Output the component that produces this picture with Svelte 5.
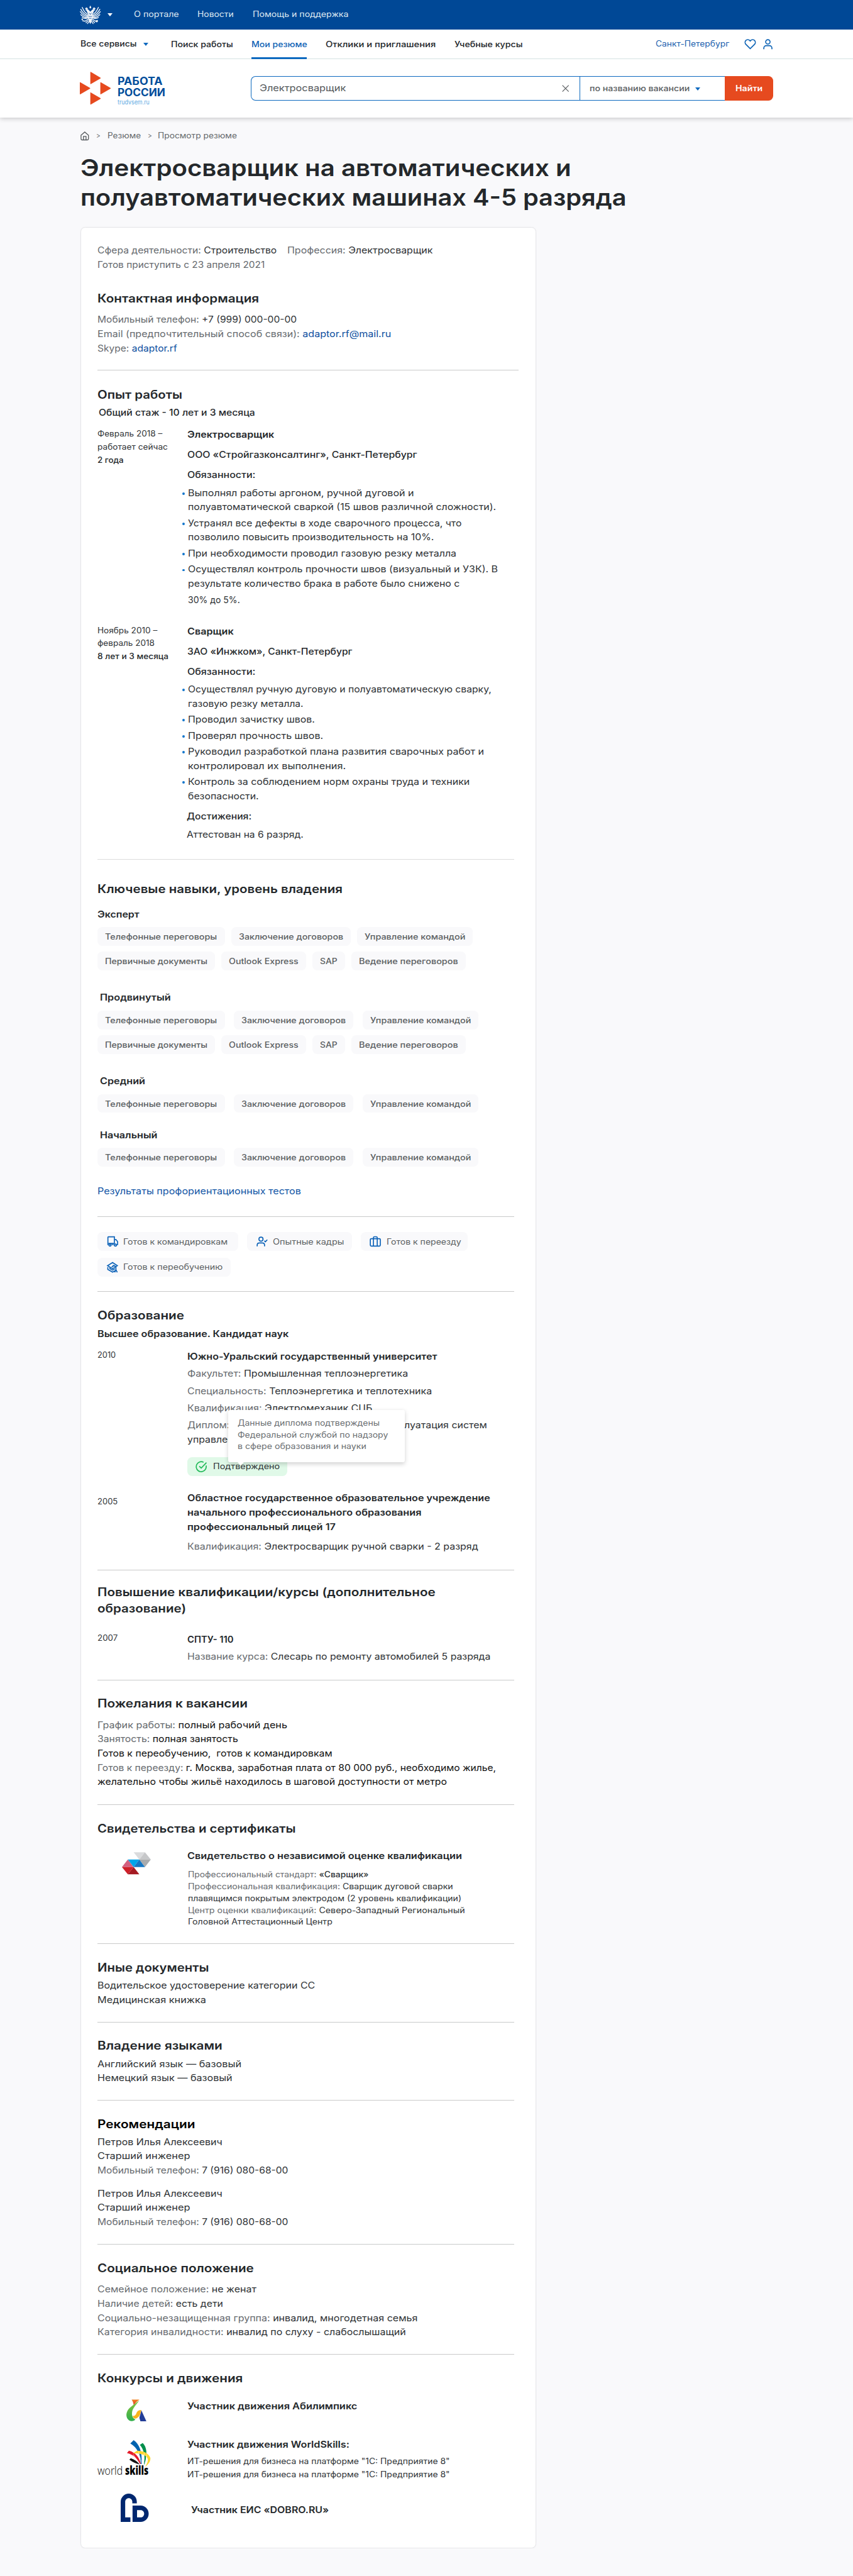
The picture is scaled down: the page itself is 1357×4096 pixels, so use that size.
<script>
  // Widens a line of text until it is `width` design units wide.
  function fit(node, width) {
    const unit = parseFloat(getComputedStyle(document.documentElement).fontSize) / 10;
    const natural = node.getBoundingClientRect().width;
    if (!width || !natural) return;
    const target = width * unit;
    node.style.transform = `scaleX(${target / natural})`;
    node.style.marginRight = `${target - natural}px`;
  }

  const jobs = [
    {
      period: [['Февраль 2018 –', 136], ['работает сейчас', 147.5]],
      total: ['2 года', 55],
      title: ['Электросварщик', 182],
      company: ['ООО «Стройгазконсалтинг», Санкт-Петербург', 482],
      duties: [
        [['Выполнял работы аргоном, ручной дуговой и', 474], ['полуавтоматической сваркой (15 швов различной сложности).', 646]],
        [['Устранял все дефекты в ходе сварочного процесса, что', 574], ['позволило повысить производительность на 10%.', 516]],
        [['При необходимости проводил газовую резку металла', 563]],
        [['Осуществлял контроль прочности швов (визуальный и УЗК). В', 650], ['результате количество брака в работе было снижено с', 570], ['30% до 5%.', 109]]
      ]
    },
    {
      period: [['Ноябрь 2010 –', 125.5], ['февраль 2018', 120]],
      total: ['8 лет и 3 месяца', 149],
      title: ['Сварщик', 97],
      company: ['ЗАО «Инжком», Санкт-Петербург', 346],
      duties: [
        [['Осуществлял ручную дуговую и полуавтоматическую сварку,', 636.5], ['газовую резку металла.', 242]],
        [['Проводил зачистку швов.', 266]],
        [['Проверял прочность швов.', 283.5]],
        [['Руководил разработкой плана развития сварочных работ и', 621], ['контролировал их выполнения.', 331]],
        [['Контроль за соблюдением норм охраны труда и техники', 591], ['безопасности.', 148.5]]
      ],
      award: ['Аттестован на 6 разряд.', 245]
    }
  ];

  const base = [['Телефонные переговоры', 235], ['Заключение договоров', 219], ['Управление командой', 211.5]];
  const extra = [['Первичные документы', 215], ['Outlook Express', 146], ['SAP', 36.5], ['Ведение переговоров', 208]];
  const skills = [
    { name: ['Эксперт', 88], rows: [base, extra] },
    { name: ['Продвинутый', 148.5], rows: [base, extra] },
    { name: ['Средний', 95], rows: [base] },
    { name: ['Начальный', 120.5], rows: [base] }
  ];
</script>

{#snippet line(text, w, cls = '')}
  <div class="line {cls}"><span use:fit={w}>{text}</span></div>
{/snippet}

{#snippet item([text, w], cls = '')}
  {@render line(text, w, cls)}
{/snippet}

{#snippet pair(label, value, w, cls = '')}
  <div class="line {cls}"><span use:fit={w}><span class="label">{label}</span> <span class="value">{value}</span></span></div>
{/snippet}

<header>
  <div class="top">
    <svg class="eagle" viewBox="0 0 44 42" fill="#f1f4f8" stroke="#f1f4f8" stroke-linecap="round">
      <path d="M20 5l2-4 2 4-1 2h-2zM11 7l3-2 3 2-1 2h-4zM33 7l-3-2-3 2 1 2h4z" stroke="none" />
      <path d="M11 11c2-3 7-3 8 0l3 3 3-3c1-3 6-3 8 0-3 0-4 1-4 4l-3 4 1 7-2 8-3 6-3-6-2-8 1-7-3-4c0-3-1-4-4-4z" stroke="none" />
      <path d="M18 20C11 18 8 12 5 5M17 22C10 21 6 16 2 9M17 24C11 24 6 21 1 14M17 26C12 27 7 25 2 20M17 27c-4 2-8 2-12-1M26 20c7-2 10-8 13-15M27 22c7-1 11-6 15-13M27 24c6 0 11-3 16-10M27 26c5 1 10-1 15-6M27 27c4 2 8 2 12-1" fill="none" stroke-width="1.9" />
      <path d="M18 29l-7 5-5-1M26 29l7 5 4-2M17 33l-4 4M27 33l4 4M19 35l-3 4M25 35l3 4" fill="none" stroke-width="1.8" />
      <circle cx="35.5" cy="34" r="2.4" stroke="none" /><circle cx="5" cy="30" r="1.6" stroke="none" />
      <path d="M20 17l2 3 2-3M19 24h6M20 28h4" fill="none" stroke="#004896" stroke-width="1" />
    </svg>
    <i class="caret white"></i>
    <nav class="top-nav">
      {@render line('О портале', 94.5)}
      {@render line('Новости', 76)}
      {@render line('Помощь и поддержка', 201)}
    </nav>
  </div>

  <div class="menu">
    {@render line('Все сервисы', 118)}
    <i class="caret"></i>
    <nav class="menu-nav">
      {@render line('Поиск работы', 130)}
      {@render line('Мои резюме', 117, 'active')}
      {@render line('Отклики и приглашения', 231)}
      {@render line('Учебные курсы', 143)}
    </nav>
    <div class="account">
      {@render line('Санкт-Петербург', 154.5, 'city')}
      <svg class="heart" viewBox="0 0 25 22"><path d="M12.5 20.3L3.6 11.4C1.2 9 1.2 5.4 3.3 3.1c2.2-2.4 6-2.3 8.2.1l1 1.1 1-1.1c2.2-2.4 6-2.5 8.2-.1 2.1 2.3 2.1 5.9-.3 8.3z" /></svg>
      <svg class="user" viewBox="0 0 20 22"><circle cx="10" cy="6" r="4.6" /><path d="M1.5 21.5v-2.3c0-3 2.2-5.2 5-5.2h7c2.8 0 5 2.2 5 5.2v2.3" /></svg>
    </div>
  </div>

  <div class="finder">
    <div class="logo">
      <svg viewBox="0 0 65 69" fill="#e64a1f"><path d="M22 1.3q0-1.6 1.4-.6L43.3 12.5q1.2.8 0 1.7L23.4 25.7q-1.4.8-1.4-.7zM0 23q0-1.6 1.4-.6L21.3 34q1.2.8 0 1.7L1.4 47.3Q0 48 0 46.6zM43 23q0-1.6 1.4-.6L64.3 34q1.2.8 0 1.7L44.4 47.3q-1.4.8-1.4-.7zM22 44.3q0-1.6 1.4-.6L43.3 55.3q1.2.8 0 1.7L23.4 68.5q-1.4.8-1.4-.7z" /></svg>
      <div class="logo-text">
        {@render line('РАБОТА', 94.5, 'brand')}
        {@render line('РОССИИ', 100, 'brand')}
        {@render line('trudvsem.ru', 67, 'site')}
      </div>
    </div>
    <div class="search">
      <div class="query">
        {@render line('Электросварщик', 181)}
        <svg viewBox="0 0 16 16"><path d="M1 1l14 14M15 1L1 15" /></svg>
      </div>
      <div class="scope">
        {@render line('по названию вакансии', 210)}
        <i class="caret"></i>
      </div>
      <button>{@render line('Найти', 57)}</button>
    </div>
  </div>
</header>

<main>
  <div class="crumbs">
    <svg viewBox="0 0 18 19"><path d="M1.2 8L9 1.2 16.8 8v7.5q0 2.3-2.3 2.3h-11q-2.3 0-2.3-2.3zM6.3 17.5v-7h5.4v7" /></svg>
    {@render line('>', 9, 'gt')}
    {@render line('Резюме', 70)}
    {@render line('>', 9, 'gt second')}
    {@render line('Просмотр резюме', 166)}
  </div>
  <h1>
    {@render line('Электросварщик на автоматических и', 1029)}
    {@render line('полуавтоматических машинах 4-5 разряда', 1145)}
  </h1>

  <article>
    <section class="contacts">
      <div class="intro">
        {@render pair('Сфера деятельности:', 'Строительство', 376)}
        {@render pair('Профессия:', 'Электросварщик', 305)}
      </div>
      {@render line('Готов приступить с 23 апреля 2021', 351, 'label')}
      <h2>{@render line('Контактная информация', 339)}</h2>
      {@render pair('Мобильный телефон:', '+7 (999) 000-00-00', 418)}
      {@render pair('Email (предпочтительный способ связи):', 'adaptor.rf@mail.ru', 616, 'link')}
      {@render pair('Skype:', 'adaptor.rf', 167, 'link')}
    </section>

    <section class="experience">
      <h2>{@render line('Опыт работы', 178)}</h2>
      {@render line('Общий стаж - 10 лет и 3 месяца', 328, 'total medium')}
      {#each jobs as job}
        <div class="entry">
          <div class="small">
            {#each job.period as row}{@render item(row)}{/each}
            {@render item(job.total, 'medium')}
          </div>
          <div>
            <div class="headings">
              {@render item(job.title, 'bold')}
              {@render item(job.company, 'medium')}
              {@render line('Обязанности:', 143, 'medium')}
            </div>
            <ul>
              {#each job.duties as duty}
                <li>{#each duty as row}{@render item(row)}{/each}</li>
              {/each}
            </ul>
            {#if job.award}
              <div class="award">
                {@render line('Достижения:', 136, 'medium')}
                {@render item(job.award)}
              </div>
            {/if}
          </div>
        </div>
      {/each}
    </section>

    <section class="skills">
      <h2>{@render line('Ключевые навыки, уровень владения', 514)}</h2>
      {#each skills as level}
        <div class="level">
          {@render item(level.name, 'bold')}
          {#each level.rows as row}
            <div class="tags">
              {#each row as tag}<div class="tag">{@render item(tag)}</div>{/each}
            </div>
          {/each}
        </div>
      {/each}
      {@render line('Результаты профориентационных тестов', 427, 'results')}
    </section>

    <section class="readiness">
      <div class="tag trip">
        <svg viewBox="0 0 24 24"><path d="M3.5 18.5H2.2V3.2q0-1 1-1h12.6v15.3M15.8 8h3.4l3.3 4.3v6.2h-1.5M9.8 18.5h4.5M3.5 16h11" /><circle cx="6.5" cy="19.5" r="2.2" /><circle cx="18" cy="19.5" r="2.2" /></svg>
        {@render line('Готов к командировкам', 219)}
      </div>
      <div class="tag staff">
        <svg viewBox="0 0 24 24"><circle cx="9.5" cy="7" r="4.3" /><path d="M1.5 22v-2.5c0-2.8 2-4.5 4.5-4.5h6.5c2.7 0 4.5 1.7 4.5 4.5V22M16.5 10.5l2.2 2 4-4.2" /></svg>
        {@render line('Опытные кадры', 149.5)}
      </div>
      <div class="tag move">
        <svg viewBox="0 0 24 24"><rect x="1.5" y="6" width="21" height="15.5" rx="2" /><path d="M8 21V4q0-2 2-2h4q2 0 2 2v17" /></svg>
        {@render line('Готов к переезду', 156.5)}
      </div>
      <div class="tag study">
        <svg viewBox="0 0 24 24"><path d="M12 2L1.5 8.5 12 15l10-6.3zM2 11.5v5L12 22l6-3.3M6.5 12v3L12 18l5-3M12 8.5h3.5l3.5 2.3V20M19 17l-2.5 5.5M19 17l2.8 5.5M10 11.5l5-3" /></svg>
        {@render line('Готов к переобучению', 208.5)}
      </div>
    </section>

    <section class="education">
      <h2>{@render line('Образование', 182)}</h2>
      {@render line('Высшее образование. Кандидат наук', 401, 'bold')}
      <div class="entry">
        <div class="small">{@render line('2010', 38.5)}</div>
        <div class="facts">
          {@render line('Южно-Уральский государственный университет', 524, 'bold')}
          {@render pair('Факультет:', 'Промышленная теплоэнергетика', 463)}
          {@render pair('Специальность:', 'Теплоэнергетика и теплотехника', 513)}
          {@render pair('Квалификация:', 'Электромеханик СЦБ', 388)}
          <div>
            {@render pair('Диплом:', 'Обслуживание и техническая эксплуатация систем', 628.5)}
            {@render line('управления', 121)}
          </div>
          <div class="confirmed">
            <svg viewBox="0 0 24 24"><path d="M22.5 9.5V12A10.500 10.500 0 1 1 17 2.8M8 11l4 4L23 3.500" /></svg>
            {@render line('Подтверждено', 140)}
            <div class="tooltip">
              {@render line('Данные диплома подтверждены', 298)}
              {@render line('Федеральной службой по надзору', 315.5)}
              {@render line('в сфере образования и науки', 270)}
            </div>
          </div>
        </div>
      </div>
      <div class="entry">
        <div class="small">{@render line('2005', 42.5)}</div>
        <div>
          {@render line('Областное государственное образовательное учреждение', 635, 'bold')}
          {@render line('начального профессионального образования', 491, 'bold')}
          {@render line('профессиональный лицей 17', 311, 'bold')}
          <div class="grade">{@render pair('Квалификация:', 'Электросварщик ручной сварки - 2 разряд', 610)}</div>
        </div>
      </div>
    </section>

    <section class="courses">
      <h2>
        {@render line('Повышение квалификации/курсы (дополнительное', 709)}
        {@render line('образование)', 186)}
      </h2>
      <div class="entry">
        <div class="small">{@render line('2007', 42.5)}</div>
        <div class="facts">
          {@render line('СПТУ- 110', 97, 'bold')}
          {@render pair('Название курса:', 'Слесарь по ремонту автомобилей 5 разряда', 636)}
        </div>
      </div>
    </section>

    <section class="wishes">
      <h2>{@render line('Пожелания к вакансии', 315)}</h2>
      {@render pair('График работы:', 'полный рабочий день', 398)}
      {@render pair('Занятость:', 'полная занятость', 295)}
      {@render line('Готов к переобучению,\u00a0 готов к командировкам', 492.5)}
      {@render pair('Готов к переезду:', 'г. Москва, заработная плата от 80 000 руб., необходимо жилье,', 836)}
      {@render line('желательно чтобы жильё находилось в шаговой доступности от метро', 733)}
    </section>

    <section class="certificates">
      <h2>{@render line('Свидетельства и сертификаты', 416)}</h2>
      <div class="entry">
        <svg class="hex" viewBox="0 0 62 47">
          <path fill="#dadbdd" d="M25 0h24L37 15.5z" /><path fill="#c6c7c9" d="M49 0l12.5 15.5H37z" /><path fill="#a9abad" d="M61.5 15.5L49 31.3 37 15.5z" />
          <path fill="#d3607f" d="M12.5 15.5L25 31.3H0z" /><path fill="#00a5ea" d="M12.5 15.5H37L25 31.3z" /><path fill="#1677c4" d="M37 15.5l12 15.8H25z" />
          <path fill="#ce2029" d="M0 31.3h25L12.5 47z" /><path fill="#a51a22" d="M25 31.3L37 47H12.5z" />
        </svg>
        <div>
          {@render line('Свидетельство о независимой оценке квалификации', 576, 'bold')}
          <div class="small tight">
            {@render pair('Профессиональный стандарт:', '«Сварщик»', 379, 'strong')}
            {@render pair('Профессиональная квалификация:', 'Сварщик дуговой сварки', 556)}
            {@render line('плавящимся покрытым электродом (2 уровень квалификации)', 573.5)}
            {@render pair('Центр оценки квалификаций:', 'Северо-Западный Региональный', 581)}
            {@render line('Головной Аттестационный Центр', 303)}
          </div>
        </div>
      </div>
    </section>

    <section class="documents">
      <h2>{@render line('Иные документы', 234)}</h2>
      {@render line('Водительское удостоверение категории СС', 456.5)}
      {@render line('Медицинская книжка', 228)}
    </section>

    <section class="languages">
      <h2>{@render line('Владение языками', 262)}</h2>
      {@render line('Английский язык — базовый', 302)}
      {@render line('Немецкий язык — базовый', 283)}
    </section>

    <section class="references">
      <h2>{@render line('Рекомендации', 205)}</h2>
      {#each [1, 2] as _}
        <div class="referee">
          {@render line('Петров Илья Алексеевич', 262)}
          {@render line('Старший инженер', 194.5)}
          {@render pair('Мобильный телефон:', '7 (916) 080-68-00', 400)}
        </div>
      {/each}
    </section>

    <section class="social">
      <h2>{@render line('Социальное положение', 328)}</h2>
      {@render pair('Семейное положение:', 'не женат', 333.5)}
      {@render pair('Наличие детей:', 'есть дети', 263.5)}
      {@render pair('Социально-незащищенная группа:', 'инвалид, многодетная семья', 671.5)}
      {@render pair('Категория инвалидности:', 'инвалид по слуху - слабослышащий', 647)}
    </section>

    <section class="contests">
      <h2>{@render line('Конкурсы и движения', 305)}</h2>
      <div class="entry abilympics">
        <svg viewBox="0 0 42 46">
          <defs>
            <linearGradient id="gr" x1="0" y1="0" x2="0" y2="1"><stop offset="0" stop-color="#f08322" /><stop offset="1" stop-color="#e2342a" /></linearGradient>
            <linearGradient id="gg" x1="0" y1="0" x2="0" y2="1"><stop offset="0" stop-color="#8bc53f" /><stop offset="1" stop-color="#2fae4b" /></linearGradient>
          </defs>
          <path fill="url(#gr)" d="M11 .5h16.5C23 3 19 7 15.5 13 15 8 13.5 4 11 .5z" />
          <path fill="url(#gg)" d="M27 2C20 13 13 18 12 27c-.8 7 1 12 7 15-4 5-13 5-17-2-4-8-1-17 6-23C15 11 20 7 27 2z" />
          <path fill="#f9b41c" d="M31.5 22.5c-7-.5-9 3-10.5 7-1.5 4-4.5 6-8 5 1 4 3 6 6.5 6C27 38 30 31 31.5 22.5z" />
          <path fill="#233e97" d="M31.5 23L42 46H29.5l-2-7c0-3 3-9 4-16z" />
        </svg>
        {@render line('Участник движения Абилимпикс', 356.5, 'bold')}
      </div>
      <div class="entry worldskills">
        <div class="ws">
          <svg viewBox="0 0 50 56">
            <path fill="#0063af" d="M7 7L14 0c12 8 18 24 17 50h-2C28 30 22 16 7 7z" />
            <path fill="#008f4c" d="M27 10l6-4c9 9 10 23 4 45h-1.5C38 34 36 20 27 10z" />
            <path fill="#e51b2b" d="M0 27l4-5c13 3 22 13 25 28h-1.5C21 38 13 30 0 27z" />
            <path fill="#111" d="M5 41l3-3c8 3 14 7 19 13-8-2-14-4-22-10z" />
            <path fill="#ffd52e" d="M12 28L21 22c12 0 25 5 28 15 1 7-4 14-11 19 5-8 7-13 5-18-4-8-19-11-31-10z" />
            <path d="M24 24l8 27M36 26q1 12-2 25M41 30q1 12-5 22M13 30l14 21" fill="none" stroke="#fff" stroke-width=".8" />
          </svg>
          <div class="wordmark"><span use:fit={53}>world</span><b use:fit={49}>skills</b></div>
        </div>
        <div>
          {@render line('Участник движения WorldSkills:', 340, 'bold')}
          <div class="small">
            {@render line('ИТ-решения для бизнеса на платформе "1С: Предприятие 8"', 550.5)}
            {@render line('ИТ-решения для бизнеса на платформе "1С: Предприятие 8"', 550.5)}
          </div>
        </div>
      </div>
      <div class="entry dobro">
        <svg viewBox="0 0 59 59.5" fill="#00276f">
          <path fill-rule="evenodd" d="M0 59.5V17.5C0 8 7.5 0 17 0s17 7.5 17 17v3.5h-9.5V17c0-4.5-3.3-7.7-7.5-7.7S9.5 12.7 9.5 17v33h11v9.5zM25 25h17c9.5 0 17 7.5 17 17.2S51.5 59.5 42 59.5H25zM34.5 34.5V50H42c4.3 0 7.5-3.4 7.5-7.8s-3.2-7.7-7.5-7.7z" />
        </svg>
        {@render line('Участник ЕИС «DOBRO.RU»', 289, 'bold')}
      </div>
    </section>
  </article>
</main>

<style>
  /* 1rem equals ten design units of the 1789-unit wide layout. */
  :global(html) { font-size: calc(1000vw / 1789); }
  :global(body) { margin: 0; background: #f9f9fb; }
  :global(#app) { font-family: Inter, 'Open Sans', sans-serif; color: #2f3336; font-size: 1.92rem; line-height: 2.98rem; }

  h1, h2 { margin: 0; font-weight: 600; color: #24282b; }
  h2 { font-size: 2.4rem; line-height: 3.5rem; }
  .line { white-space: nowrap; }
  .line > span { display: inline-block; transform-origin: 0 50%; }
  svg { display: block; overflow: visible; flex: none; }
  .label { color: #676b6f; }
  .medium { font-weight: 500; color: #24282b; }
  .bold { font-weight: 600; color: #24282b; }
  .link .value { color: #0d4f9f; }
  .strong .value { font-weight: 500; }
  .small { font-size: 1.68rem; line-height: 2.72rem; }
  .caret { width: 0; height: 0; border: .6rem solid transparent; border-top: .7rem solid #0d69bf; border-bottom: 0; flex: none; }
  .caret.white { border-top-color: #fff; }

  header { background: #fff; box-shadow: 0 .3rem 1rem rgba(0, 0, 0, .22); font-size: 1.68rem; }
  .top { height: 6.2rem; box-sizing: border-box; background: #004896; color: #dfe8f2; padding-left: 16.8rem; display: flex; align-items: center; }
  .eagle { width: 4.4rem; height: 4.2rem; margin-right: 1.3rem; }
  .top-nav { display: flex; gap: 3.95rem; margin-left: 4.5rem; padding-bottom: .1rem; }
  .menu { height: 6.2rem; box-sizing: border-box; border-bottom: 1px solid #d5e2e2; padding: 0 16.8rem 0 16.9rem; display: flex; align-items: center; font-weight: 500; color: #212529; }
  .menu > .caret { margin: .1rem 0 0 1.35rem; }
  .menu-nav { display: flex; gap: 3.9rem; margin-left: 4.7rem; align-self: stretch; line-height: 6.3rem; }
  .menu-nav :global(.active) { color: #0f63b5; box-shadow: inset 0 -.4rem #0d69bf; height: 6.2rem; }
  .account { margin-left: auto; display: flex; align-items: center; font-weight: 400; color: #1c5fae; }
  .account svg { height: 2.2rem; fill: none; stroke: #0d63b5; stroke-width: 2.2; }
  .heart { width: 2.5rem; margin-left: 3.15rem; }
  .user { width: 2rem; margin-left: 1.5rem; }
  .finder { height: 12.3rem; box-sizing: border-box; padding: 2.6rem 16.8rem 0; display: flex; }
  .logo { display: flex; width: 35.8rem; }
  .logo svg { width: 6.5rem; height: 6.9rem; }
  .logo-text { margin: 1rem 0 0 1.35rem; }
  .brand { font-size: 2.2rem; line-height: 2.3rem; font-weight: 700; color: #004d9b; }
  .site { font-size: 1.3rem; line-height: 1.7rem; color: #62aae2; }
  .search { flex: 1; height: 5.1rem; margin-top: 1rem; display: flex; line-height: 5rem; color: #55595c; }
  .query, .scope { box-sizing: border-box; border: 1px solid #0d69bf; display: flex; align-items: center; flex: none; }
  .query { width: 68.9rem; border-radius: 1rem 0 0 1rem; border-right: 0; padding: 0 2.1rem 0 1.7rem; justify-content: space-between; font-size: 1.92rem; }
  .query svg { width: 1.5rem; height: 1.5rem; stroke: #55595c; stroke-width: 1.6; }
  .scope { width: 30.5rem; border-right: 0; padding-left: 2rem; font-weight: 500; color: #5a5e61; }
  .scope .caret { margin: .2rem 0 0 1.15rem; }
  button { flex: 1; border: 0; padding: 0; border-radius: 0 1rem 1rem 0; background: #e64a1f; color: #fff; font: 600 1.7rem/5rem Inter, sans-serif; }

  main { padding: 2.7rem 0 0 16.85rem; }
  .crumbs { display: flex; align-items: center; font-size: 1.68rem; line-height: 2.2rem; color: #65696c; }
  .crumbs svg { width: 1.8rem; height: 1.9rem; fill: none; stroke: #55595c; stroke-width: 1.7; }
  .gt { margin: 0 1.5rem; font-size: 1.5rem; }
  .gt.second { margin-right: 1.1rem; }
  h1 { font-size: 4.8rem; line-height: 6.2rem; margin-top: 2.54rem; }

  article { box-sizing: border-box; width: 95.6rem; height: 486.6rem; margin-top: 3.1rem; border: 1px solid #e6e6e9; border-radius: 1rem; background: #fff; padding-left: 3.5rem; box-shadow: 0 .1rem .3rem rgba(0, 0, 0, .04); }
  section { box-sizing: border-box; width: 87.3rem; border-bottom: 1px solid #c9caca; }
  .entry { display: grid; grid-template-columns: 18.85rem 1fr; align-items: start; }

  .contacts { width: 88.3rem; height: 29.95rem; padding-top: 3.28rem; }
  .intro { display: flex; gap: 2.2rem; }
  .contacts h2 { margin: 3.75rem 0 1.33rem; }

  .experience { height: 102.48rem; padding-top: 3.18rem; border-bottom: .16rem solid #dcdcdc; }
  .total { margin: .69rem 0 0 .25rem; }
  .experience .entry { margin-top: 1.63rem; }
  .experience .entry + .entry { margin-top: 3.62rem; }
  .headings { display: grid; gap: 1.24rem; }
  ul { list-style: none; margin: .78rem 0 0; padding: 0 0 0 .13rem; display: grid; gap: .37rem; }
  li { position: relative; }
  li::before { content: ''; position: absolute; left: -1.2rem; top: 1.35rem; width: .5rem; height: .5rem; border-radius: 50%; background: #1476cc; }
  li :global(.line:nth-child(3)) { margin-top: .4rem; }
  .award { display: grid; gap: .74rem; margin: 1.34rem 0 0 -.2rem; }

  .skills { height: 74.92rem; padding-top: 4.38rem; }
  .level { margin-top: 4.21rem; }
  .level > :global(.line) { margin-left: .5rem; }
  h2 + .level { margin-top: 2.1rem; }
  h2 + .level > :global(.line) { margin-left: 0; }
  .level:nth-of-type(4) { margin-top: 3.23rem; }
  .tags { display: flex; gap: 1.93rem; margin-top: 1.17rem; }
  .tags + .tags, h2 + .level .tags { gap: 1.33rem; }
  .tags + .tags { margin-top: 1.25rem; }
  .tag { box-sizing: border-box; height: 3.95rem; border-radius: 1rem; background: #f9f9fb; padding: 0 1.58rem; color: #5b5f62; font-size: 1.68rem; line-height: 4.1rem; font-weight: 500; }
  .results { margin-top: 3.68rem; color: #1457a6; }

  .readiness { height: 15.68rem; padding-top: 3.2rem; display: flex; flex-wrap: wrap; gap: 1.37rem 1.87rem; align-content: flex-start; }
  .readiness .tag { display: flex; align-items: center; gap: 1.1rem; padding: 0 0 0 1.9rem; font-weight: 400; }
  .readiness svg { width: 2.4rem; height: 2.4rem; fill: none; stroke: #0d63b8; stroke-width: 2.2; }
  .trip { width: 29.5rem; }
  .staff { width: 21.94rem; }
  .move { width: 22.46rem; }
  .study { width: 27.9rem; }

  .education { height: 58.42rem; padding-top: 3.13rem; }
  .education h2 { margin-bottom: .75rem; }
  .education .entry { margin-top: 1.69rem; }
  .facts { display: grid; gap: .62rem; padding-top: .1rem; }
  .confirmed { position: relative; display: flex; align-items: center; box-sizing: border-box; width: 20.95rem; height: 3.95rem; margin-top: 1.6rem; padding-left: 1.65rem; gap: 1.3rem; border-radius: 1rem; background: #e0f9e8; font-size: 1.68rem; }
  .confirmed svg { width: 2.4rem; height: 2.4rem; fill: none; stroke: #1fb957; stroke-width: 2.2; }
  .tooltip { position: absolute; box-sizing: border-box; left: 8.5rem; bottom: 2.98rem; width: 37.1rem; height: 10.95rem; padding: 1.6rem 2rem; border-radius: .4rem; background: #fff; color: #6a6e71; line-height: 2.48rem; box-shadow: 0 .3rem 1rem rgba(0, 0, 0, .18); }
  .tooltip::after { content: ''; position: absolute; left: 1.95rem; top: 100%; border: .75rem solid transparent; border-top-color: #fff; border-bottom: 0; }
  .education .entry + .entry { margin-top: 3.14rem; line-height: 3rem; }
  .education .entry + .entry .small { padding-top: .84rem; }
  .grade { margin-top: 1.2rem; }

  .courses { height: 23rem; padding-top: 2.72rem; }
  .courses .entry { margin-top: 3.15rem; }
  .wishes { height: 26.1rem; padding-top: 3.1rem; color: #111; }
  .wishes h2 { margin-bottom: 1.35rem; }
  .certificates { height: 29.15rem; padding-top: 3.17rem; }
  .certificates .entry { margin-top: 2.6rem; }
  .hex { width: 6.1rem; height: 4.7rem; margin: .63rem 0 0 5.1rem; }
  .tight { line-height: 2.49rem; margin: 1.24rem 0 0 .13rem; }
  .documents { height: 16.48rem; padding-top: 3.17rem; }
  .documents h2 { margin-bottom: .69rem; }
  .languages { height: 16.37rem; padding-top: 3.12rem; }
  .languages h2 { margin-bottom: .64rem; }
  .references { height: 30.2rem; padding-top: 3.15rem; }
  .references h2 { margin-bottom: .6rem; color: #000; }
  .referee + .referee { margin-top: 1.84rem; }
  .social { height: 23.1rem; padding-top: 3.15rem; }
  .social h2 { margin-bottom: 1.33rem; }

  .contests { border: 0; padding-top: 3.15rem; }
  .abilympics { margin-top: 2.68rem; height: 8.11rem; }
  .abilympics svg { width: 4.2rem; height: 4.64rem; margin-left: 6rem; }
  .worldskills { height: 11.66rem; }
  .worldskills .small { margin-top: .68rem; }
  .ws { padding-top: .46rem; color: #000; }
  .ws svg { width: 5rem; height: 5.6rem; margin-left: 6.2rem; }
  .wordmark { font: 300 2.5rem/2.6rem 'Open Sans', sans-serif; display: flex; gap: .4rem; margin-top: -.4rem; }
  .wordmark span, .wordmark b { flex: none; transform-origin: 0 50%; }
  .wordmark b { font-weight: 800; }
  .dobro { align-items: center; }
  .dobro svg { width: 5.87rem; height: 5.95rem; margin-left: 4.8rem; }
  .dobro :global(.line) { padding: .95rem 0 0 .8rem; }
</style>
